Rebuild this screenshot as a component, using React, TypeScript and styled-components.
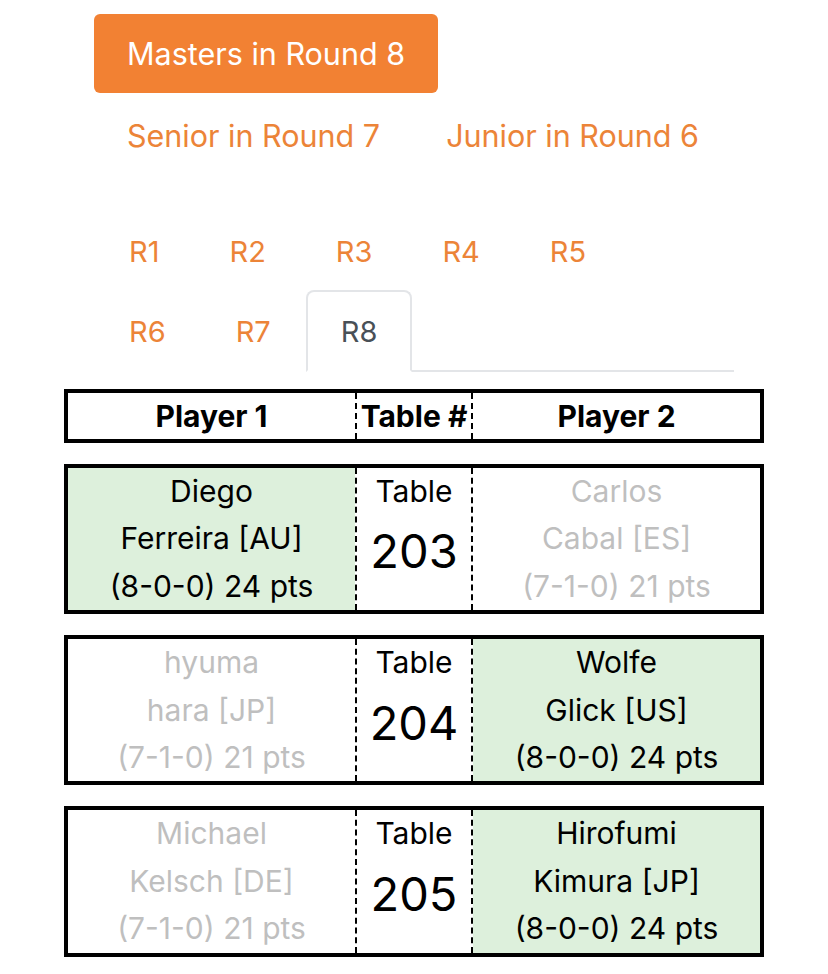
import React from 'react';
import styled, { createGlobalStyle } from 'styled-components';

const GlobalStyle = createGlobalStyle`
  body {
    margin: 0;
    background: #ffffff;
    font-family: Inter, "Noto Sans", sans-serif;
    color: #000;
  }
`;

type Player = {
  first: string;
  last: string;
  country: string;
  record: string;
  pts: number;
};

type Pairing = {
  table: number;
  p1: Player;
  p2: Player;
  winner: 1 | 2;
};

const pairings: Pairing[] = [
  {
    table: 203,
    p1: { first: 'Diego', last: 'Ferreira', country: 'AU', record: '8-0-0', pts: 24 },
    p2: { first: 'Carlos', last: 'Cabal', country: 'ES', record: '7-1-0', pts: 21 },
    winner: 1,
  },
  {
    table: 204,
    p1: { first: 'hyuma', last: 'hara', country: 'JP', record: '7-1-0', pts: 21 },
    p2: { first: 'Wolfe', last: 'Glick', country: 'US', record: '8-0-0', pts: 24 },
    winner: 2,
  },
  {
    table: 205,
    p1: { first: 'Michael', last: 'Kelsch', country: 'DE', record: '7-1-0', pts: 21 },
    p2: { first: 'Hirofumi', last: 'Kimura', country: 'JP', record: '8-0-0', pts: 24 },
    winner: 2,
  },
];

const divisions = [
  { label: 'Masters in Round 8', active: true },
  { label: 'Senior in Round 7', active: false },
  { label: 'Junior in Round 6', active: false },
];

const rounds = ['R1', 'R2', 'R3', 'R4', 'R5', 'R6', 'R7', 'R8'];

const Page = styled.div`
  width: 828px;
  padding: 14px 64px 0;
  box-sizing: border-box;
`;

const Nav = styled.div`
  padding: 0 30px;
`;

const Pills = styled.div`
  display: flex;
  flex-wrap: wrap;
  align-items: center;
`;

// forces the next item onto a new line in a wrapping flex row
const LineBreak = styled.div`
  flex-basis: 100%;
  height: 0;
`;

const Pill = styled.div<{ $active?: boolean }>`
  height: 79px;
  display: flex;
  align-items: center;
  padding: 0 33px;
  border-radius: 6px;
  font-size: 30.5px;
  white-space: nowrap;
  background: ${(p) => (p.$active ? '#f28133' : 'transparent')};
  color: ${(p) => (p.$active ? '#ffffff' : '#ec8438')};
  margin-bottom: ${(p) => (p.$active ? '3px' : '0')};
`;

const Tabs = styled.div`
  margin-top: 35px;
  display: flex;
  flex-wrap: wrap;
  border-bottom: 2px solid #e3e5e8;
`;

const Tab = styled.div<{ $active?: boolean }>`
  height: 82px;
  display: flex;
  align-items: center;
  padding: 0 33px;
  margin-bottom: -2px;
  font-size: 29px;
  box-sizing: border-box;
  border: 2px solid ${(p) => (p.$active ? '#e3e5e8' : 'transparent')};
  border-bottom-color: ${(p) => (p.$active ? '#ffffff' : 'transparent')};
  border-radius: 8px 8px 0 0;
  color: ${(p) => (p.$active ? '#495057' : '#ec8438')};
  background: #fff;
`;

const Table = styled.div`
  margin-top: 17px;
  display: flex;
  flex-direction: column;
  gap: 21px;
`;

const Row = styled.div`
  display: grid;
  grid-template-columns: 287px 118px 1fr;
  border: 4px solid #000;
`;

const Cell = styled.div<{ $win?: boolean; $lose?: boolean }>`
  text-align: center;
  font-size: 30px;
  line-height: 47.4px;
  white-space: nowrap;
  background: ${(p) => (p.$win ? '#ddf0dc' : '#fff')};
  color: ${(p) => (p.$lose ? '#bfbfbf' : '#000')};
`;

const MiddleCell = styled(Cell)`
  border-left: 2px dashed #000;
  border-right: 2px dashed #000;
`;

const HeadCell = styled(Cell)`
  font-weight: 700;
  line-height: 46px;
`;

const HeadMiddle = styled(HeadCell)`
  border-left: 2px dashed #000;
  border-right: 2px dashed #000;
`;

const TableNumber = styled.div`
  font-size: 47px;
  line-height: 72px;
`;

const PlayerCell = ({ player, win }: { player: Player; win: boolean }) => (
  <Cell $win={win} $lose={!win}>
    <div>{player.first}</div>
    <div>
      {player.last} [{player.country}]
    </div>
    <div>
      ({player.record}) {player.pts} pts
    </div>
  </Cell>
);

export default function App() {
  return (
    <Page>
      <GlobalStyle />
      <Nav>
        <Pills>
          {divisions.map((d) => (
            <React.Fragment key={d.label}>
              <Pill $active={d.active}>{d.label}</Pill>
              {d.active && <LineBreak />}
            </React.Fragment>
          ))}
        </Pills>
        <Tabs>
          {rounds.map((r, i) => (
            <React.Fragment key={r}>
              <Tab $active={r === 'R8'}>{r}</Tab>
              {i === 4 && <LineBreak />}
            </React.Fragment>
          ))}
        </Tabs>
      </Nav>
      <Table>
        <Row>
          <HeadCell>Player 1</HeadCell>
          <HeadMiddle>Table #</HeadMiddle>
          <HeadCell>Player 2</HeadCell>
        </Row>
        {pairings.map((m) => (
          <Row key={m.table}>
            <PlayerCell player={m.p1} win={m.winner === 1} />
            <MiddleCell>
              <div>Table</div>
              <TableNumber>{m.table}</TableNumber>
            </MiddleCell>
            <PlayerCell player={m.p2} win={m.winner === 2} />
          </Row>
        ))}
      </Table>
    </Page>
  );
}
